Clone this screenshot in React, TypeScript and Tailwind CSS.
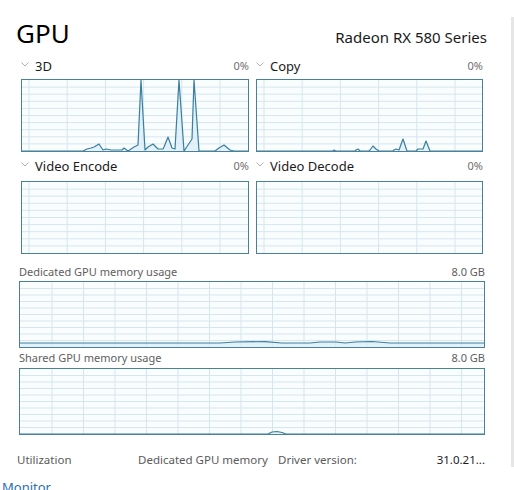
import React from "react";

const font = { fontFamily: '"Noto Sans", "Open Sans", sans-serif' };

type Pt = [number, number];

const pts3d: Pt[] = [
  [0, 71], [61, 71], [65, 69], [69, 68], [72, 67], [77, 64], [81, 70], [84, 69], [89, 70],
  [100, 70], [102, 68], [106, 71], [112, 67], [116, 65], [119, 0], [123, 70], [126, 67],
  [131, 64], [136, 69], [141, 69], [142, 67], [146, 57], [150, 68], [153, 69], [157, 0],
  [162, 71], [166, 65], [170, 59], [172, 0], [177, 71], [193, 71], [197, 68], [202, 65],
  [208, 70], [212, 71], [226, 71],
];

const ptsCopy: Pt[] = [
  [0, 71], [76, 71], [77, 70], [79, 71], [98, 71], [99, 70], [101, 69], [103, 71],
  [112, 71], [113, 70], [116, 66], [119, 69], [122, 71], [136, 71], [137, 70], [139, 69],
  [142, 70], [146, 59], [150, 71], [159, 71], [161, 69], [166, 69], [169, 61], [173, 71],
  [225, 71],
];

const ptsDedicated: Pt[] = [
  [0, 61], [200, 61], [215, 60], [245, 59.6], [262, 61], [290, 61], [300, 60], [316, 60],
  [325, 61], [335, 60], [352, 59.5], [370, 61], [464, 61],
];

const ptsShared: Pt[] = [
  [0, 65], [248, 65], [252, 63], [257, 62.5], [262, 63.5], [266, 65], [464, 65],
];

function Chart({
  w,
  h,
  colStart,
  colStep,
  points,
}: {
  w: number;
  h: number;
  colStart: number;
  colStep: number;
  points: Pt[];
}) {
  const cols: number[] = [];
  for (let x = colStart; x < w; x += colStep) cols.push(x);
  const rows = Array.from({ length: 9 }, (_, i) => ((i + 1) * h) / 10);
  const line = points.map((p) => p.join(",")).join(" ");
  const area = `0,${h} ${line} ${w},${h}`;

  return (
    <div className="border border-[#4a8199] bg-[#fafdfe]" style={{ width: w + 2, height: h + 2 }}>
      <svg width={w} height={h} className="block">
        {rows.map((y) => (
          <line key={`r${y}`} x1={0} x2={w} y1={y} y2={y} stroke="#d6e6ee" strokeWidth={1} />
        ))}
        {cols.map((x) => (
          <line key={`c${x}`} x1={x} x2={x} y1={0} y2={h} stroke="#d6e6ee" strokeWidth={1} />
        ))}
        {points.length > 0 && (
          <>
            <polygon points={area} fill="#d9edf7" opacity={0.7} />
            <polyline points={line} fill="none" stroke="#3a7ea0" strokeWidth={1.2} strokeLinejoin="round" />
          </>
        )}
      </svg>
    </div>
  );
}

function Chevron() {
  return (
    <svg width="8" height="5" viewBox="0 0 8 5" className="mr-[6px] mb-[3px]">
      <polyline points="0.5,0.5 4,4 7.5,0.5" fill="none" stroke="#9a9a9a" strokeWidth="0.8" />
    </svg>
  );
}

function EngineHead({ name }: { name: string }) {
  return (
    <div className="flex items-center justify-between h-[20px] leading-[20px]">
      <div className="flex items-center text-[13px] text-[#1b1b1b]">
        <Chevron />
        {name}
      </div>
      <span className="text-[11px] text-[#707070]">0%</span>
    </div>
  );
}

function Engine({
  name,
  points,
  last,
  gap,
}: {
  name: string;
  points: Pt[];
  last?: boolean;
  gap: string;
}) {
  return (
    <div className={last ? "w-[229px] pl-[2px]" : "w-[228px]"}>
      <EngineHead name={name} />
      <div className={gap}>
        <Chart w={last ? 225 : 226} h={71} colStart={7} colStep={38.2} points={points} />
      </div>
    </div>
  );
}

function MemHead({ label }: { label: string }) {
  return (
    <div className="flex justify-between h-[16px] leading-[16px] text-[11px] text-[#5e5e5e] pl-[3px] mr-[2px]">
      <span>{label}</span>
      <span>8.0 GB</span>
    </div>
  );
}

export default function App() {
  return (
    <div className="w-[514px] h-[490px] bg-white overflow-hidden flex" style={font}>
      <div className="flex-1">
        <div className="pl-[16px] pr-[24px]">
          <div className="flex items-baseline justify-between pt-[20px]">
            <h1 className="text-[26px] leading-none font-normal text-black">GPU</h1>
            <span className="text-[15px] leading-none text-[#1a1a1a]">Radeon RX 580 Series</span>
          </div>

          <div className="mt-[10px] ml-[5px] flex gap-[5px]">
            <Engine name="3D" points={pts3d} gap="mt-[3px]" />
            <Engine name="Copy" points={ptsCopy} gap="mt-[3px]" last />
          </div>

          <div className="mt-[4px] ml-[5px] flex gap-[5px]">
            <Engine name="Video Encode" points={[]} gap="mt-[5px]" />
            <Engine name="Video Decode" points={[]} gap="mt-[5px]" last />
          </div>

          <div className="mt-[10px]">
            <MemHead label="Dedicated GPU memory usage" />
            <div className="mt-[1px] ml-[3px]">
              <Chart w={464} h={65} colStart={32} colStep={31.5} points={ptsDedicated} />
            </div>
          </div>

          <div className="mt-[2px]">
            <MemHead label="Shared GPU memory usage" />
            <div className="mt-[2px] ml-[3px]">
              <Chart w={464} h={65} colStart={32} colStep={31.5} points={ptsShared} />
            </div>
          </div>

          <div className="mt-[17px] flex items-center text-[11.5px] leading-[16px] text-[#5a5a5a] mr-[2px]">
            <span className="ml-[1px] w-[121px]">Utilization</span>
            <span className="w-[140px]">Dedicated GPU memory</span>
            <span className="flex-1">Driver version:</span>
            <span className="text-[#1b1b1b]">31.0.21...</span>
          </div>
        </div>
        <div className="pl-[2px] mt-[11px] text-[13px] leading-[16px] text-[#2a6fb0]">Monitor</div>
      </div>
      <div className="w-[3px] mt-[17px] h-[450px] bg-[#e6e6e6]" />
    </div>
  );
}
